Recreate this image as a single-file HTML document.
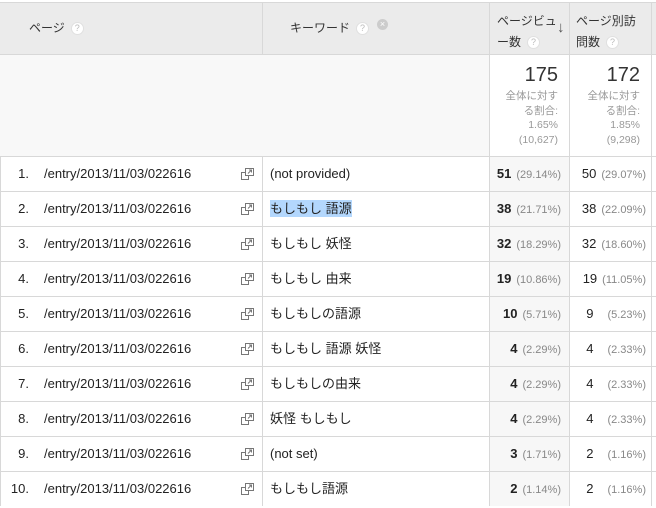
<!DOCTYPE html>
<html><head><meta charset="utf-8"><style>
*{margin:0;padding:0;box-sizing:border-box}
body{width:656px;height:506px;overflow:hidden;background:#fff;font-family:"Liberation Sans","Noto Sans CJK JP",sans-serif;color:#222;position:relative}
.a{position:absolute}
.hl{position:absolute;height:1px;background:#d8d8d8}
.vl{position:absolute;width:1px;background:#d8d8d8}
.q{display:inline-block;width:13px;height:13px;border-radius:50%;background:#fff;border:1px solid #e0e0e0;color:#bbb;font-size:9px;line-height:11px;text-align:center;vertical-align:middle;margin-left:6px;font-weight:normal}
.hd{font-size:12px;color:#333}
.row{position:absolute;left:0;width:656px;height:35px;font-size:13px;line-height:35px}
.row span{line-height:35px}
.n{position:absolute;right:627px;top:0;text-align:right}
.p{position:absolute;left:44px;top:0}
.ic{position:absolute;left:241px;top:12px;width:13px;height:12px}
.k{position:absolute;left:270px;top:0}
.k.sel{top:9px;line-height:17px !important;background:#b3d7fd}
.m1{position:absolute;right:95px;top:0;font-weight:bold}
.m2{position:absolute;right:10px;top:0}
.pc{font-size:11px;color:#888;font-weight:normal;margin-left:5px}
.t{font-size:10.5px;color:#999;text-align:right;line-height:14.5px}
</style></head><body>
<div class="a" style="left:0;top:2px;width:656px;height:52px;background:#ebebeb"></div>
<div class="a" style="left:0;top:54px;width:489px;height:102px;background:#f8f8f8"></div>
<div class="a" style="left:489px;top:156px;width:80px;height:350px;background:#f7f7f7"></div>
<div class="hl" style="left:0;top:2px;width:656px"></div>
<div class="hl" style="left:0;top:54px;width:656px"></div>
<div class="vl" style="left:262px;top:2px;height:52px"></div>
<div class="vl" style="left:262px;top:156px;height:350px"></div>
<div class="vl" style="left:489px;top:2px;height:504px"></div>
<div class="vl" style="left:569px;top:2px;height:504px"></div>
<div class="vl" style="left:651px;top:2px;height:504px"></div>
<div class="vl" style="left:0;top:156px;height:350px"></div>
<div class="a hd" style="left:29px;top:19px">ページ<span class="q">?</span></div>
<div class="a hd" style="left:290px;top:19px">キーワード<span class="q">?</span><span style="display:inline-block;width:11px;height:11px;border-radius:50%;background:#ccc;color:#fff;font-size:9px;line-height:11px;text-align:center;margin-left:8px;vertical-align:top">×</span></div>
<div class="a hd" style="left:497px;top:11px;line-height:21px">ページビュ<br>ー数<span class="q">?</span></div>
<div class="a" style="left:557px;top:19px;font-size:15px;color:#555">↓</div>
<div class="a hd" style="left:576px;top:11px;line-height:21px">ページ別訪<br>問数<span class="q">?</span></div>
<div class="a" style="right:98px;top:64px;font-size:20px;color:#333">175</div>
<div class="a t" style="right:98px;top:89px">全体に対す<br>る割合:<br>1.65%<br>(10,627)</div>
<div class="a" style="right:16px;top:64px;font-size:20px;color:#333">172</div>
<div class="a t" style="right:16px;top:89px">全体に対す<br>る割合:<br>1.85%<br>(9,298)</div>
<div id="rows"></div>
<script>
var d=[["(not provided)","51","29.14%","50","29.07%"],["もしもし 語源","38","21.71%","38","22.09%"],["もしもし 妖怪","32","18.29%","32","18.60%"],["もしもし 由来","19","10.86%","19","11.05%"],["もしもしの語源","10","5.71%","9","5.23%"],["もしもし 語源 妖怪","4","2.29%","4","2.33%"],["もしもしの由来","4","2.29%","4","2.33%"],["妖怪 もしもし","4","2.29%","4","2.33%"],["(not set)","3","1.71%","2","1.16%"],["もしもし語源","2","1.14%","2","1.16%"]];
var h="";
d.forEach(function(r,i){var y=156+i*35;
h+='<div class="hl" style="left:0;top:'+y+'px;width:656px"></div><div class="row" style="top:'+y+'px"><span class="n">'+(i+1)+'.</span><span class="p">/entry/2013/11/03/022616</span><svg class="ic" viewBox="0 0 13 12"><rect x="0.5" y="4.5" width="7" height="7" fill="#fff" stroke="#777"/><rect x="4.5" y="0.5" width="8" height="7" fill="#fff" stroke="#777"/><path d="M7 5.5L10.5 2M8 2h2.5v2.5" stroke="#777" fill="none"/></svg><span class="k'+(i==1?' sel':'')+'">'+r[0]+'</span><span class="m1">'+r[1]+'<span class="pc">('+r[2]+')</span></span><span class="m2">'+r[3]+'<span class="pc" style="margin-left:'+(r[3].length<2?14:5)+'px">('+r[4]+')</span></span></div>';});
document.getElementById("rows").innerHTML=h;
</script>
</body></html>
